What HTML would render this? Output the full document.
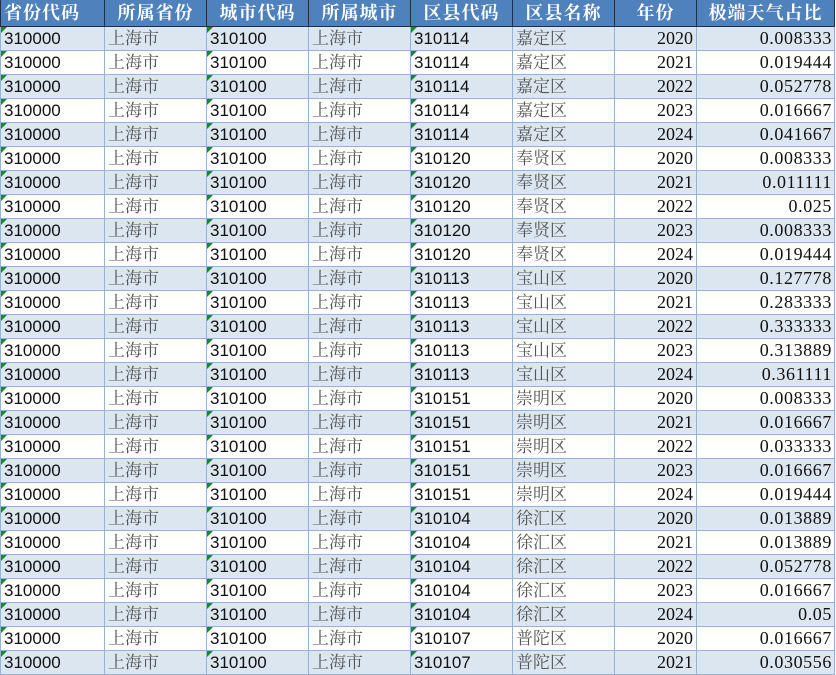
<!DOCTYPE html>
<html><head><meta charset="utf-8"><style>
body{margin:0;background:#fff;width:836px;height:675px;overflow:hidden}
table{border-collapse:collapse;table-layout:fixed;position:absolute;left:0;top:0}
td,th{padding:0 3px;white-space:nowrap;overflow:hidden;font-size:17px;line-height:23px;height:23px;border:1px solid #95b3d7}
th{background:#4f81bd;color:#fff;font-family:"Liberation Serif","Noto Serif CJK SC",serif;font-weight:bold;font-size:18px;height:26px;border:1px solid #1f2f45;border-top:none;text-align:center;letter-spacing:1px}
th:first-child{text-align:left}
tr:nth-child(even) td{background:#dce6f1}
td{font-family:"Liberation Sans",sans-serif;color:#111;position:relative}
td.z{font-family:"Liberation Serif","Noto Serif CJK SC",serif;color:#555}
td.t::before{content:"";position:absolute;left:0;top:0;border-top:6px solid #1a8a1a;border-right:6px solid transparent}
td.r{text-align:right;font-family:"Liberation Serif",serif;font-size:18px}
td.d{text-align:right;font-family:"Liberation Serif",serif;font-size:18px;letter-spacing:0.6px;color:#111;padding-right:2px}
</style></head><body>
<table>
<colgroup><col style="width:104px"><col style="width:102px"><col style="width:102px"><col style="width:102px"><col style="width:102px"><col style="width:102px"><col style="width:82px"><col style="width:138px"></colgroup>
<tr><th>省份代码</th><th>所属省份</th><th>城市代码</th><th>所属城市</th><th>区县代码</th><th>区县名称</th><th>年份</th><th>极端天气占比</th></tr>
<tr><td class="t">310000</td><td class="z">上海市</td><td class="t">310100</td><td class="z">上海市</td><td class="t">310114</td><td class="z">嘉定区</td><td class="r">2020</td><td class="d">0.008333</td></tr>
<tr><td class="t">310000</td><td class="z">上海市</td><td class="t">310100</td><td class="z">上海市</td><td class="t">310114</td><td class="z">嘉定区</td><td class="r">2021</td><td class="d">0.019444</td></tr>
<tr><td class="t">310000</td><td class="z">上海市</td><td class="t">310100</td><td class="z">上海市</td><td class="t">310114</td><td class="z">嘉定区</td><td class="r">2022</td><td class="d">0.052778</td></tr>
<tr><td class="t">310000</td><td class="z">上海市</td><td class="t">310100</td><td class="z">上海市</td><td class="t">310114</td><td class="z">嘉定区</td><td class="r">2023</td><td class="d">0.016667</td></tr>
<tr><td class="t">310000</td><td class="z">上海市</td><td class="t">310100</td><td class="z">上海市</td><td class="t">310114</td><td class="z">嘉定区</td><td class="r">2024</td><td class="d">0.041667</td></tr>
<tr><td class="t">310000</td><td class="z">上海市</td><td class="t">310100</td><td class="z">上海市</td><td class="t">310120</td><td class="z">奉贤区</td><td class="r">2020</td><td class="d">0.008333</td></tr>
<tr><td class="t">310000</td><td class="z">上海市</td><td class="t">310100</td><td class="z">上海市</td><td class="t">310120</td><td class="z">奉贤区</td><td class="r">2021</td><td class="d">0.011111</td></tr>
<tr><td class="t">310000</td><td class="z">上海市</td><td class="t">310100</td><td class="z">上海市</td><td class="t">310120</td><td class="z">奉贤区</td><td class="r">2022</td><td class="d">0.025</td></tr>
<tr><td class="t">310000</td><td class="z">上海市</td><td class="t">310100</td><td class="z">上海市</td><td class="t">310120</td><td class="z">奉贤区</td><td class="r">2023</td><td class="d">0.008333</td></tr>
<tr><td class="t">310000</td><td class="z">上海市</td><td class="t">310100</td><td class="z">上海市</td><td class="t">310120</td><td class="z">奉贤区</td><td class="r">2024</td><td class="d">0.019444</td></tr>
<tr><td class="t">310000</td><td class="z">上海市</td><td class="t">310100</td><td class="z">上海市</td><td class="t">310113</td><td class="z">宝山区</td><td class="r">2020</td><td class="d">0.127778</td></tr>
<tr><td class="t">310000</td><td class="z">上海市</td><td class="t">310100</td><td class="z">上海市</td><td class="t">310113</td><td class="z">宝山区</td><td class="r">2021</td><td class="d">0.283333</td></tr>
<tr><td class="t">310000</td><td class="z">上海市</td><td class="t">310100</td><td class="z">上海市</td><td class="t">310113</td><td class="z">宝山区</td><td class="r">2022</td><td class="d">0.333333</td></tr>
<tr><td class="t">310000</td><td class="z">上海市</td><td class="t">310100</td><td class="z">上海市</td><td class="t">310113</td><td class="z">宝山区</td><td class="r">2023</td><td class="d">0.313889</td></tr>
<tr><td class="t">310000</td><td class="z">上海市</td><td class="t">310100</td><td class="z">上海市</td><td class="t">310113</td><td class="z">宝山区</td><td class="r">2024</td><td class="d">0.361111</td></tr>
<tr><td class="t">310000</td><td class="z">上海市</td><td class="t">310100</td><td class="z">上海市</td><td class="t">310151</td><td class="z">崇明区</td><td class="r">2020</td><td class="d">0.008333</td></tr>
<tr><td class="t">310000</td><td class="z">上海市</td><td class="t">310100</td><td class="z">上海市</td><td class="t">310151</td><td class="z">崇明区</td><td class="r">2021</td><td class="d">0.016667</td></tr>
<tr><td class="t">310000</td><td class="z">上海市</td><td class="t">310100</td><td class="z">上海市</td><td class="t">310151</td><td class="z">崇明区</td><td class="r">2022</td><td class="d">0.033333</td></tr>
<tr><td class="t">310000</td><td class="z">上海市</td><td class="t">310100</td><td class="z">上海市</td><td class="t">310151</td><td class="z">崇明区</td><td class="r">2023</td><td class="d">0.016667</td></tr>
<tr><td class="t">310000</td><td class="z">上海市</td><td class="t">310100</td><td class="z">上海市</td><td class="t">310151</td><td class="z">崇明区</td><td class="r">2024</td><td class="d">0.019444</td></tr>
<tr><td class="t">310000</td><td class="z">上海市</td><td class="t">310100</td><td class="z">上海市</td><td class="t">310104</td><td class="z">徐汇区</td><td class="r">2020</td><td class="d">0.013889</td></tr>
<tr><td class="t">310000</td><td class="z">上海市</td><td class="t">310100</td><td class="z">上海市</td><td class="t">310104</td><td class="z">徐汇区</td><td class="r">2021</td><td class="d">0.013889</td></tr>
<tr><td class="t">310000</td><td class="z">上海市</td><td class="t">310100</td><td class="z">上海市</td><td class="t">310104</td><td class="z">徐汇区</td><td class="r">2022</td><td class="d">0.052778</td></tr>
<tr><td class="t">310000</td><td class="z">上海市</td><td class="t">310100</td><td class="z">上海市</td><td class="t">310104</td><td class="z">徐汇区</td><td class="r">2023</td><td class="d">0.016667</td></tr>
<tr><td class="t">310000</td><td class="z">上海市</td><td class="t">310100</td><td class="z">上海市</td><td class="t">310104</td><td class="z">徐汇区</td><td class="r">2024</td><td class="d">0.05</td></tr>
<tr><td class="t">310000</td><td class="z">上海市</td><td class="t">310100</td><td class="z">上海市</td><td class="t">310107</td><td class="z">普陀区</td><td class="r">2020</td><td class="d">0.016667</td></tr>
<tr><td class="t">310000</td><td class="z">上海市</td><td class="t">310100</td><td class="z">上海市</td><td class="t">310107</td><td class="z">普陀区</td><td class="r">2021</td><td class="d">0.030556</td></tr>
</table>
</body></html>
